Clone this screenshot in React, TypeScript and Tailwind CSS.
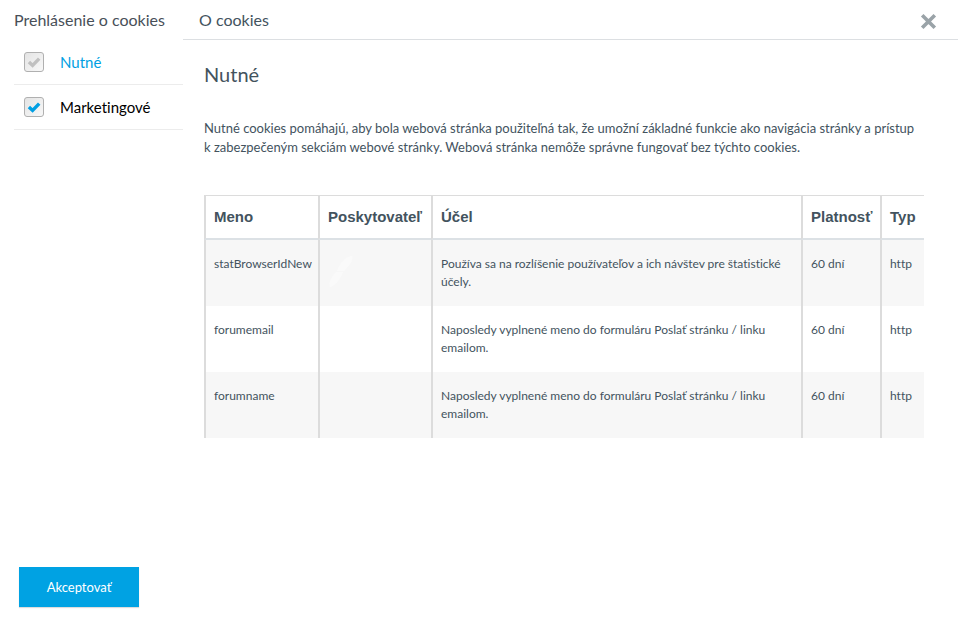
type Category = { id: string; label: string; active?: boolean; locked?: boolean };

const categories: Category[] = [
  { id: "necessary", label: "Nutné", active: true, locked: true },
  { id: "marketing", label: "Marketingové" },
];

const headings = ["Meno", "Poskytovateľ", "Účel", "Platnosť", "Typ"];

const cookies = [
  {
    name: "statBrowserIdNew",
    purpose: "Používa sa na rozlíšenie používateľov a ich návštev pre štatistické účely.",
    watermark: true,
  },
  {
    name: "forumemail",
    purpose: "Naposledy vyplnené meno do formuláru Poslať stránku / linku emailom.",
    watermark: false,
  },
  {
    name: "forumname",
    purpose: "Naposledy vyplnené meno do formuláru Poslať stránku / linku emailom.",
    watermark: false,
  },
];

function CategoryItem({ id, label, active, locked }: Category) {
  return (
    <li className="border-b border-[#ececec]">
      <label
        htmlFor={id}
        className={`flex h-11 items-center gap-4 pl-[10px] text-[15px] ${active ? "text-[#009fe3]" : "text-black"}`}
      >
        <span className="grid size-5">
          <input
            id={id}
            type="checkbox"
            defaultChecked
            disabled={locked}
            className="col-start-1 row-start-1 size-5 appearance-none rounded-[3px] border border-[#b0b0b0] bg-linear-to-br from-[#e4e4e4] to-[#f8f8f8]"
          />
          <svg
            viewBox="0 0 20 20"
            aria-hidden="true"
            className={`pointer-events-none col-start-1 row-start-1 size-5 ${locked ? "text-[#c0c0c0]" : "text-[#009fe3]"}`}
          >
            <path d="M4.9 9.9 8.6 13.4 15.2 6.6" fill="none" stroke="currentColor" strokeWidth="3.4" />
          </svg>
        </span>
        {label}
      </label>
    </li>
  );
}

function CookieTable() {
  return (
    <table className="w-full table-fixed border-separate border-spacing-0 text-left">
      <colgroup>
        <col className="w-[114px]" />
        <col className="w-[113px]" />
        <col />
        <col className="w-[79px]" />
        <col className="w-11" />
      </colgroup>
      <thead>
        <tr className="h-[45px]">
          {headings.map((heading) => (
            <th
              key={heading}
              scope="col"
              className="whitespace-nowrap border-t border-b-2 border-l-2 border-t-[#dcdcdc] border-b-[#dce1e5] border-l-[#dcdcdc] pl-2 font-['Liberation_Sans',Arial,sans-serif] text-[15px] leading-5 font-bold"
            >
              {heading}
            </th>
          ))}
        </tr>
      </thead>
      <tbody className="text-[12px] leading-[18px]">
        {cookies.map((cookie) => (
          <tr key={cookie.name} className="h-[66px] align-top odd:bg-[#f7f7f7]">
            <td className="border-l-2 border-[#dcdcdc] pt-[15px] pl-2 whitespace-nowrap">{cookie.name}</td>
            <td className="border-l-2 border-[#dcdcdc] pt-[14px] pl-2">
              {cookie.watermark && (
                <svg viewBox="0 0 26 34" aria-hidden="true" className="h-[34px] w-[26px]">
                  <path
                    d="M24 2C19 2 12 8 9 17L16 17C21 12 26 6 24 2ZM8 18C4 22 0 29 2 33C6 33 12 26 15 18Z"
                    fill="#fafafa"
                  />
                </svg>
              )}
            </td>
            <td className="border-l-2 border-[#dcdcdc] pt-[15px] pr-4 pl-2">{cookie.purpose}</td>
            <td className="border-l-2 border-[#dcdcdc] pt-[15px] pl-2">60 dní</td>
            <td className="border-l-2 border-[#dcdcdc] pt-[15px] pl-2">http</td>
          </tr>
        ))}
      </tbody>
    </table>
  );
}

export default function App() {
  return (
    <div className="flex min-h-screen bg-white font-[Lato,'Open_Sans',sans-serif] text-[#43535e] [font-variant-ligatures:none]">
      <aside className="flex w-[183px] shrink-0 flex-col justify-between pl-[14px]">
        <div>
          <h2 className="flex h-10 items-center text-[16px] whitespace-nowrap text-[#484f58]">
            Prehlásenie o cookies
          </h2>
          <ul>
            {categories.map((category) => (
              <CategoryItem key={category.id} {...category} />
            ))}
          </ul>
        </div>
        <button
          type="button"
          className="mb-[29px] ml-[5px] h-10 w-[120px] bg-[#00a2e3] pt-0.5 text-[13px] text-white shadow-[0_1px_1px_#00000022]"
        >
          Akceptovať
        </button>
      </aside>
      <main className="min-w-0 flex-1">
        <header className="flex h-10 items-center justify-between border-b border-[#dcdfe2] pr-[21px] pl-4">
          <h2 className="text-[16px]">O cookies</h2>
          <button type="button" aria-label="Zavrieť" className="mt-1 text-[#9aa3a8]">
            <svg viewBox="0 0 17 17" aria-hidden="true" className="size-[17px]">
              <path d="M2.2 2.2 14.8 14.8M14.8 2.2 2.2 14.8" stroke="currentColor" strokeWidth="3.6" />
            </svg>
          </button>
        </header>
        <div className="pr-[34px] pl-[21px]">
          <h1 className="pt-5 text-[20px] leading-7">Nutné</h1>
          <p className="pt-[31px] pb-[38px] text-[13px] leading-[19px]">
            Nutné cookies pomáhajú, aby bola webová stránka použiteľná tak, že umožní základné funkcie ako navigácia
            stránky a prístup k zabezpečeným sekciám webové stránky. Webová stránka nemôže správne fungovať bez týchto
            cookies.
          </p>
          <CookieTable />
        </div>
      </main>
    </div>
  );
}
